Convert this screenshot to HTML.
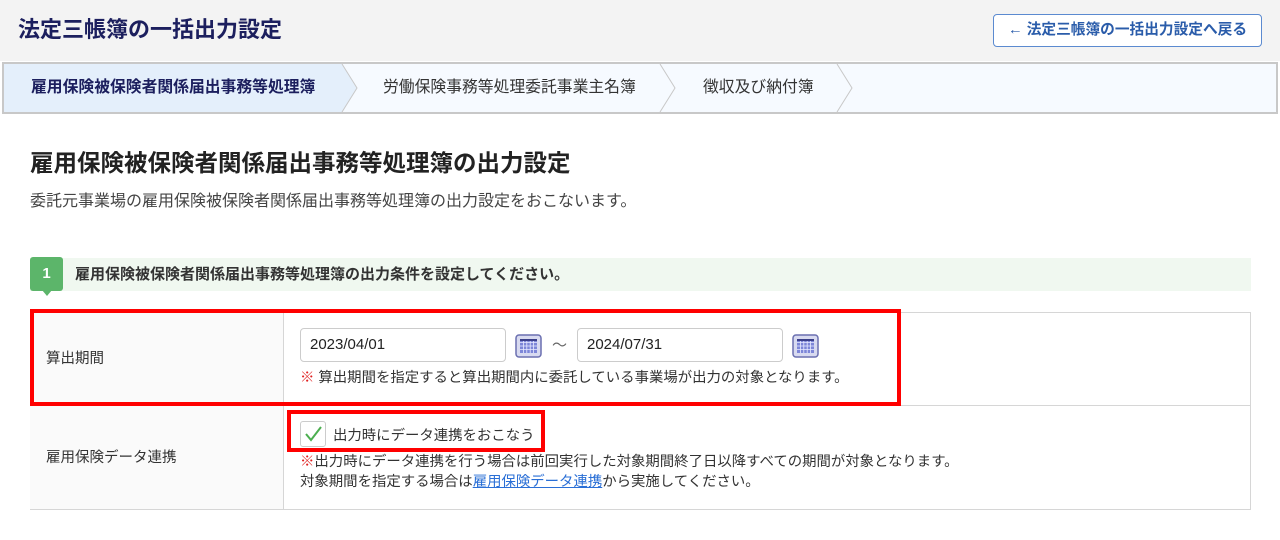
<!DOCTYPE html>
<html><head><meta charset="utf-8"><style>
*{box-sizing:border-box;margin:0;padding:0}
body{width:1280px;height:540px;background:#fff;font-family:"Liberation Sans","Noto Sans CJK JP",sans-serif;color:#333;position:relative;overflow:hidden}
.abs{position:absolute;white-space:nowrap}
.hdr{left:0;top:0;width:1280px;height:61px;background:#f3f3f3}
.title{left:18px;top:15px;font-size:22px;font-weight:bold;color:#1c1f5e;line-height:30px}
.btn{left:993px;top:14px;width:269px;height:33px;border:1px solid #5b8ad0;border-radius:4px;background:#fff;color:#2a5caa;font-size:14.7px;font-weight:bold;text-align:center;line-height:31px}
.tabs{left:2px;top:62px;width:1276px;height:52px;border:2px solid #c8c8c8;background:#f6faff}
.tabs svg{position:absolute;left:0;top:0}
.tab{top:0;line-height:48px;font-size:15.8px;color:#333}
.h2{left:30px;top:148px;font-size:23.5px;font-weight:bold;color:#222;line-height:30px}
.sub{left:30px;top:191px;font-size:16px;color:#444;line-height:22px}
.step{left:30px;top:258px;width:1221px;height:33px;background:#f0f8f0}
.badge{left:30px;top:257px;width:33px;height:34px;background:#5cb56a;border-radius:3px;color:#fff;font-weight:bold;font-size:15px;text-align:center;line-height:34px}
.tail{left:42px;top:290px;width:0;height:0;border-left:5px solid transparent;border-right:5px solid transparent;border-top:6px solid #5cb56a}
.steptxt{left:75px;top:258px;line-height:33px;font-size:15px;font-weight:bold;color:#333}
.tbl{left:30px;top:312px;width:1221px;height:198px;border:1px solid #d6d6d6}
.lab{left:30px;width:254px;background:#fafafa;border-right:1px solid #d6d6d6}
.row2{left:30px;top:405px;width:1221px;height:1px;background:#d6d6d6}
.lbl{font-size:14.5px;color:#333}
.inp{height:34px;width:206px;border:1px solid #ccc;border-radius:4px;background:#fff;font-size:15px;line-height:32px;padding-left:9px;color:#222}
.note{font-size:14.4px;color:#333;line-height:20px}
.red{color:#e02020}
.rbox{border:4px solid #f00}
a{color:#2a6fd6;text-decoration:underline}
</style></head><body>
<div class="abs hdr"></div>
<div class="abs title">法定三帳簿の一括出力設定</div>
<div class="abs btn">← 法定三帳簿の一括出力設定へ戻る</div>
<div class="abs tabs">
<svg width="1276" height="48"><polygon points="0,0 338,0 353,24 338,48 0,48" fill="#e4effb"/>
<polyline points="338,0 353,24 338,48" fill="none" stroke="#c8c8c8" stroke-width="1"/>
<polyline points="656,0 671,24 656,48" fill="none" stroke="#c8c8c8" stroke-width="1"/>
<polyline points="833,0 848,24 833,48" fill="none" stroke="#c8c8c8" stroke-width="1"/></svg>
<div class="abs tab" style="left:27px;font-weight:bold;color:#1c1f5e">雇用保険被保険者関係届出事務等処理簿</div>
<div class="abs tab" style="left:379px">労働保険事務等処理委託事業主名簿</div>
<div class="abs tab" style="left:699px">徴収及び納付簿</div>
</div>
<div class="abs h2">雇用保険被保険者関係届出事務等処理簿の出力設定</div>
<div class="abs sub">委託元事業場の雇用保険被保険者関係届出事務等処理簿の出力設定をおこないます。</div>
<div class="abs step"></div>
<div class="abs badge">1</div><div class="abs tail"></div>
<div class="abs steptxt">雇用保険被保険者関係届出事務等処理簿の出力条件を設定してください。</div>
<div class="abs tbl"></div>
<div class="abs lab" style="top:313px;height:196px"></div>
<div class="abs row2"></div>
<div class="abs lbl" style="left:46px;top:347px">算出期間</div>
<div class="abs lbl" style="left:46px;top:446px">雇用保険データ連携</div>
<div class="abs inp" style="left:300px;top:328px">2023/04/01</div>
<svg class="abs" style="left:515px;top:334px" width="27" height="24"><rect x="1" y="1" width="25" height="22" rx="3" fill="#d8daf0" stroke="#6a6fb0" stroke-width="1.5"/><rect x="5" y="5" width="17" height="14" fill="#7d86d8"/><path d="M5 8.5h17M5 12h17M5 15.5h17M8.4 5v14M11.8 5v14M15.2 5v14M18.6 5v14" stroke="#e8eaff" stroke-width=".8"/><rect x="5" y="5" width="17" height="2" fill="#3b3f8a"/></svg>
<div class="abs" style="left:552px;top:334px;font-size:15px;color:#666">～</div>
<div class="abs inp" style="left:577px;top:328px">2024/07/31</div>
<svg class="abs" style="left:792px;top:334px" width="27" height="24"><rect x="1" y="1" width="25" height="22" rx="3" fill="#d8daf0" stroke="#6a6fb0" stroke-width="1.5"/><rect x="5" y="5" width="17" height="14" fill="#7d86d8"/><path d="M5 8.5h17M5 12h17M5 15.5h17M8.4 5v14M11.8 5v14M15.2 5v14M18.6 5v14" stroke="#e8eaff" stroke-width=".8"/><rect x="5" y="5" width="17" height="2" fill="#3b3f8a"/></svg>
<div class="abs note" style="left:300px;top:368px"><span class="red">※</span> 算出期間を指定すると算出期間内に委託している事業場が出力の対象となります。</div>
<div class="abs rbox" style="left:30px;top:309px;width:871px;height:97px"></div>
<div class="abs" style="left:300px;top:421px;width:26px;height:26px;border:1px solid #ccc;border-radius:3px;background:#fff"></div>
<svg class="abs" style="left:302px;top:423px" width="22" height="22"><path d="M4 11l5 6L19 4" fill="none" stroke="#4caf50" stroke-width="2"/></svg>
<div class="abs" style="left:333px;top:424px;font-size:14.4px;color:#333">出力時にデータ連携をおこなう</div>
<div class="abs rbox" style="left:287px;top:410px;width:258px;height:42px"></div>
<div class="abs note" style="left:300px;top:452px"><span class="red">※</span>出力時にデータ連携を行う場合は前回実行した対象期間終了日以降すべての期間が対象となります。<br>対象期間を指定する場合は<a>雇用保険データ連携</a>から実施してください。</div>
</body></html>
